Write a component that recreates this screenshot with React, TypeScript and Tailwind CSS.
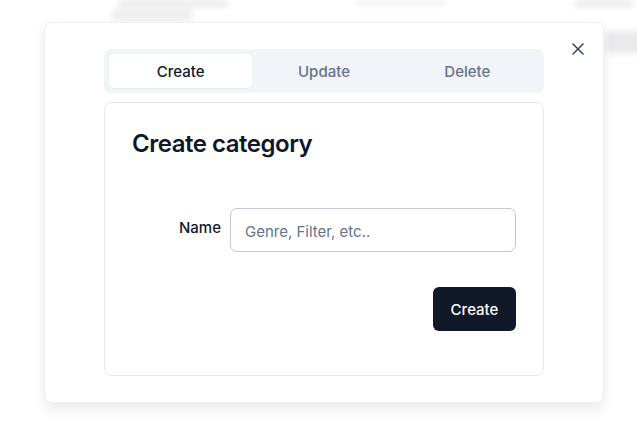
import { X } from "lucide-react"

const tabs = ["Create", "Update", "Delete"]

export default function App() {
  return (
    <div className="relative h-[439px] w-[637px] overflow-hidden bg-white font-['Inter',sans-serif]">
      {/* page behind the dialog, blurred */}
      <div className="absolute inset-0 blur-[3px]">
        <div className="flex items-start gap-[128px] pl-[118px]">
          <div className="flex flex-col gap-[2px]">
            <div className="h-[7px] w-[110px] rounded bg-[#d4d4d8]" />
            <div className="ml-[-6px] h-[12px] w-[80px] rounded bg-[#dcdce0]" />
          </div>
          <div className="h-[5px] w-[90px] rounded bg-[#dcdce0]" />
          <div className="h-[7px] w-[60px] rounded bg-[#d4d4d8]" />
        </div>
        <div className="ml-[606px] mt-[10px] h-[22px] w-[40px] bg-[#d4d4d8]" />
      </div>
      <div className="absolute inset-0 bg-white/50" />

      <div className="relative pl-[44px] pt-[22px]">
        <div className="relative w-[560px] rounded-[8px] border border-[#eef0f3] bg-white px-[59px] py-[26px] shadow-[0_6px_14px_rgba(0,0,0,0.09)]">
          <button className="absolute right-[15px] top-[16px] text-[#334155]">
            <X size={20} strokeWidth={1.7} />
          </button>

          <div className="grid h-[44px] grid-cols-3 rounded-[7px] bg-[#f1f5f9] p-[5px]">
            {tabs.map((t, i) => (
              <div
                key={t}
                className={
                  i === 0
                    ? "flex items-center justify-center rounded-[5px] bg-white pt-[2px] text-[15px] font-medium text-[#0f172a] shadow-[0_1px_2px_rgba(0,0,0,0.05)]"
                    : "flex items-center justify-center pt-[2px] text-[15px] font-medium text-[#64748b]"
                }
              >
                {t}
              </div>
            ))}
          </div>

          <div className="mt-[9px] h-[274px] rounded-[8px] border border-[#e5e7eb] pl-[27px] pr-[27px] pt-[25px]">
            <h2 className="text-[24px] font-semibold leading-[32px] tracking-[-0.02em] text-[#0f172a]">
              Create category
            </h2>

            <div className="mt-[48px] flex justify-end gap-[9px]">
              <label className="mt-[11px] text-[15px] font-medium leading-[18px] text-[#0f172a]">
                Name
              </label>
              <input
                placeholder="Genre, Filter, etc.."
                className="h-[44px] w-[286px] rounded-[7px] border border-[#c3c8d0] px-[14px] pt-[2px] text-[15px] text-[#0f172a] outline-none placeholder:text-[#64748b]"
              />
            </div>

            <div className="mt-[35px] flex justify-end">
              <button className="h-[44px] w-[83px] rounded-[6px] bg-[#111827] pt-[3px] text-[15px] font-medium text-white">
                Create
              </button>
            </div>
          </div>
        </div>
      </div>
    </div>
  )
}
